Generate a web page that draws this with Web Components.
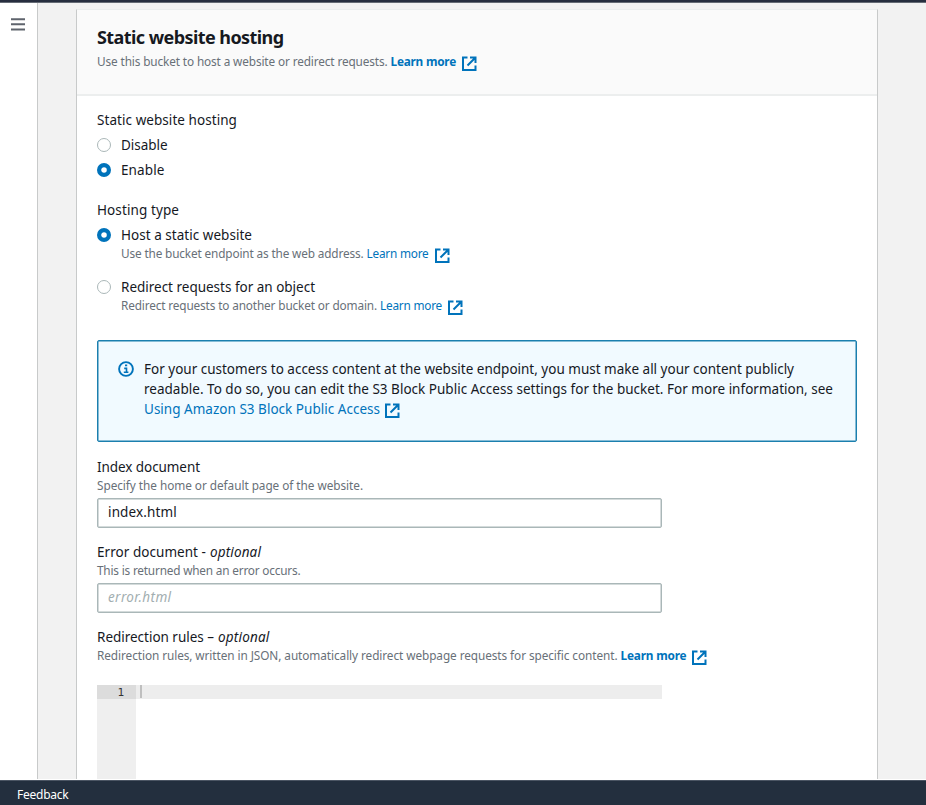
<!DOCTYPE html>
<html lang="en">
<head>
<meta charset="utf-8">
<title>Static website hosting</title>
<style>
html,body{margin:0;height:100%}
body{font-family:"Noto Sans","Open Sans",sans-serif;font-size:13.5px;line-height:20px;color:#16191f;overflow:hidden;background:#fff}
</style>
</head>
<body>
<console-shell>
  <side-rail slot="rail"></side-rail>
  <settings-card>
    <ui-text slot="title" w="186.5">Static website hosting</ui-text>
    <hint-line slot="title" link="Learn more" lw="65.5" bold><ui-text w="290.5">Use this bucket to host a website or redirect requests.</ui-text></hint-line>

    <option-group>
      <ui-text slot="label" w="140">Static website hosting</ui-text>
      <radio-option><ui-text w="46.5">Disable</ui-text></radio-option>
      <radio-option checked><ui-text w="43.5">Enable</ui-text></radio-option>
    </option-group>

    <option-group style="margin-top:20px">
      <ui-text slot="label" w="82">Hosting type</ui-text>
      <radio-option checked><ui-text w="131">Host a static website</ui-text>
        <hint-line slot="hint" link="Learn more" lw="62"><ui-text w="242.5">Use the bucket endpoint as the web address.</ui-text></hint-line></radio-option>
      <radio-option style="margin-top:11px"><ui-text w="194">Redirect requests for an object</ui-text>
        <hint-line slot="hint" link="Learn more" lw="62"><ui-text w="256">Redirect requests to another bucket or domain.</ui-text></hint-line></radio-option>
    </option-group>

    <info-alert>
      <ui-text w="650">For your customers to access content at the website endpoint, you must make all your content publicly</ui-text>
      <ui-text w="689">readable. To do so, you can edit the S3 Block Public Access settings for the bucket. For more information, see</ui-text>
      <ext-link label="Using Amazon S3 Block Public Access" w="236" drop="1.5" near></ext-link>
    </info-alert>

    <form-field style="margin-top:15px">
      <ui-text slot="label" w="103">Index document</ui-text>
      <hint-line slot="hint"><ui-text w="266">Specify the home or default page of the website.</ui-text></hint-line>
      <text-box><ui-text w="69">index.html</ui-text></text-box>
    </form-field>
    <form-field style="margin-top:14px">
      <ui-text slot="label" w="109">Error document -</ui-text><ui-text slot="label" w="51" italic>optional</ui-text>
      <hint-line slot="hint"><ui-text w="203.5">This is returned when an error occurs.</ui-text></hint-line>
      <text-box placeholder><ui-text w="63.5" italic>error.html</ui-text></text-box>
    </form-field>
    <form-field style="margin-top:14px">
      <ui-text slot="label" w="117">Redirection rules –</ui-text><ui-text slot="label" w="51.5" italic>optional</ui-text>
      <hint-line slot="hint" link="Learn more" lw="66" bold near><ui-text w="520.5">Redirection rules, written in JSON, automatically redirect webpage requests for specific content.</ui-text></hint-line>
      <code-editor></code-editor>
    </form-field>
  </settings-card>
  <ui-text slot="footer" w="51.5">Feedback</ui-text>
</console-shell>

<script>
const define = (name, html, setup) => customElements.define(name, class extends HTMLElement {
  constructor() {
    super();
    this.attachShadow({ mode: 'open' });
  }
  connectedCallback() {
    if (this.ready) return;
    this.ready = true;
    this.shadowRoot.innerHTML = typeof html === 'function' ? html(this) : html;
    if (setup) setup(this);
  }
});

/* A single line of text, tracked so that it fills the width in its "w" attribute. */
define('ui-text', `<style>
:host{display:inline-block;white-space:pre;flex:none}
:host([italic]){font-style:italic}
span{display:inline-block}
</style><span><slot></slot></span>`, el => {
  requestAnimationFrame(() => {
    const span = el.shadowRoot.querySelector('span');
    const target = parseFloat(el.getAttribute('w'));
    const width = span.getBoundingClientRect().width;
    el.style.letterSpacing = (target - width) / el.textContent.length + 'px';
    el.style.width = target + 'px';
  });
});

define('console-shell', `<style>
:host{display:grid;grid-template-rows:3px 776px 26px;height:805px;overflow:hidden}
.top{background:#272e3f;border-bottom:1px solid #656b75;box-sizing:border-box}
.mid{display:grid;grid-template-columns:38px 1fr;min-height:0}
main{background:#f2f2f2;padding:6px 48px 0 38px;overflow:hidden;min-width:0}
footer{background:#232f3e;border-top:1px solid #fff;box-shadow:inset 0 1px #4b5563;padding:5px 0 0 17px;color:#fff;font-size:12px;line-height:20px;box-sizing:border-box}
</style><div class="top"></div><div class="mid"><slot name="rail"></slot><main><slot></slot></main></div><footer><slot name="footer"></slot></footer>`);

define('side-rail', `<style>
:host{display:block;background:#fff;border-right:1px solid #c8caca;padding:15px 0 0 11px;box-sizing:border-box}
svg{display:block}
</style><svg width="14" height="13" fill="#5f646d"><path d="M0 .3h14v2H0zM0 5.3h14v2H0zM0 10.4h14v2H0z"/></svg>`);

define('settings-card', `<style>
:host{display:block;height:900px;box-sizing:border-box;background:#fff;border:1px solid #c8caca;border-top-color:#eaeded}
header{display:flex;flex-direction:column;gap:4px;height:86px;box-sizing:border-box;padding:15px 20px 0;background:#fafafa;border-bottom:2px solid #eceeee}
::slotted(ui-text){font-size:18px;font-weight:700;line-height:24px}
section{padding:14px 20px}
</style><header><slot name="title"></slot></header><section><slot></slot></section>`);

define('ext-icon', `<style>:host{display:block;flex:none}svg{display:block}</style>
<svg width="15" height="15" fill="none" stroke="#0073bb" stroke-width="2"><path d="M5.5 1.5H1V14h12.5V9.5M8 1.5h5.5V7M13.5 1.5L5.5 9.5"/></svg>`);

define('ext-link', el => `<style>
:host{display:flex;align-items:center;color:#0073bb;gap:${el.hasAttribute('near') ? 5 : 6}px;height:var(--lh,20px)}
ui-text{font-weight:${el.hasAttribute('bold') ? 700 : 400}}
ext-icon{position:relative;top:${el.getAttribute('drop') || 2.5}px}
</style><ui-text w="${el.getAttribute('w')}">${el.getAttribute('label')}</ui-text><ext-icon></ext-icon>`);

define('hint-line', el => {
  const flags = (el.hasAttribute('bold') ? ' bold' : '') + (el.hasAttribute('near') ? ' near' : '');
  const link = el.getAttribute('link');
  return `<style>
:host{display:flex;gap:3px;height:16px;font-size:11.8px;line-height:16px;color:#687078;--lh:16px}
</style><slot></slot>${link ? `<ext-link label="${link}" w="${el.getAttribute('lw')}"${flags}></ext-link>` : ''}`;
});

define('option-group', `<style>
:host{display:block}
.label{height:20px;margin-bottom:5px}
.items{display:flex;flex-direction:column;gap:5px}
</style><div class="label"><slot name="label"></slot></div><div class="items"><slot></slot></div>`);

define('radio-option', `<style>
:host{display:grid;grid-template-columns:14px 1fr;column-gap:10px}
svg{display:block;margin-top:3.4px}
circle{fill:#fff;stroke:#aab7b8}
:host([checked]) circle{stroke:#0073bb;stroke-width:4.2;r:4.9px}
.text{height:20px;overflow:hidden}
</style><svg width="14" height="14"><circle cx="7" cy="7" r="6.5"/></svg><div><div class="text"><slot></slot></div><slot name="hint"></slot></div>`);

define('info-alert', `<style>
:host{display:flex;gap:10px;height:102px;margin-top:27px;box-sizing:border-box;padding:17.5px 20px;background:#f1faff;border:1.5px solid #1b7fae;box-shadow:inset 0 0 0 .5px #1b7fae;border-radius:2px}
svg{flex:none;margin-top:2.5px}
.body{display:flex;flex-direction:column}
</style><svg width="16" height="16" fill="none" stroke="#0073bb" stroke-width="1.9"><circle cx="8" cy="8" r="6.9"/><path d="M7 4.4h2.2M6.2 7.4h2.3v4M5.8 11.3h4.6" stroke-width="1.6"/></svg><div class="body"><slot></slot></div>`);

define('form-field', `<style>
:host{display:block}
.label{display:flex;gap:4px;height:20px}
</style><div class="label"><slot name="label"></slot></div><slot name="hint"></slot><slot></slot>`);

define('text-box', `<style>
:host{display:block;width:565px;height:30px;margin-top:5px;box-sizing:border-box;border:1px solid #aab7b8;box-shadow:inset 0 0 0 .5px #aab7b8;border-radius:2px;padding:3px 10px}
:host([placeholder]){color:#a2aeb0}
</style><slot></slot>`);

define('code-editor', `<style>
:host{display:grid;grid-template-columns:39px 526px;height:180px;margin-top:22px}
.gutter{background:#efefef}
.num{height:14px;background:#dcdcdc;color:#333;font:11px/15px "DejaVu Sans Mono",monospace;text-align:right;padding-right:12px}
.line{height:14px;background:#ededed;padding-left:4px}
.caret{width:2px;height:13px;background:#bfbfbf}
</style><div class="gutter"><div class="num">1</div></div><div><div class="line"><div class="caret"></div></div></div>`);
</script>
</body>
</html>
